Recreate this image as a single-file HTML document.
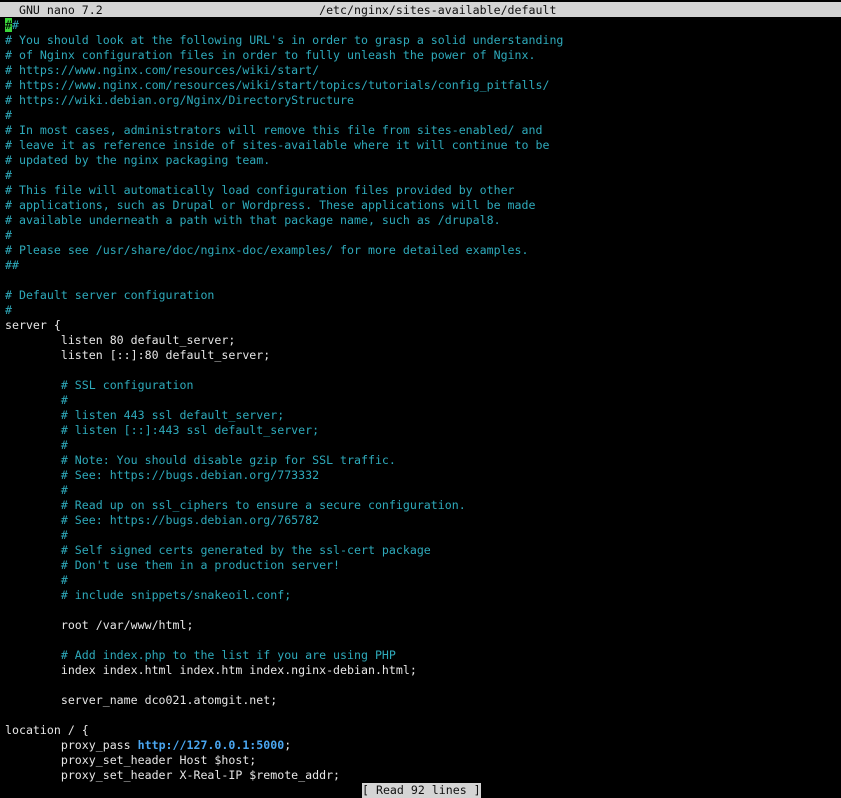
<!DOCTYPE html>
<html><head><meta charset="utf-8"><style>
html,body{margin:0;padding:0;background:#000;width:841px;height:789px;overflow:hidden}
.t{position:absolute;left:0;top:0;width:841px}
pre{margin:0;font-family:"DejaVu Sans Mono","Liberation Mono",monospace;font-size:11.6px;line-height:15px;color:#e6e6e6;padding-left:5px;white-space:pre}
.hd{position:absolute;left:0;top:2px;width:841px;height:15px;background:#d4d4d4}
.hd pre{color:#111}
.c{color:#2eaabb}
.u{color:#4aa6f0;font-weight:bold}
.cur{background:#3ad53a;color:#000}
.st{position:absolute;left:362px;top:783px;height:15px;background:#d4d4d4}
.st pre{color:#111;padding-left:0}
</style></head><body>
<div class="hd"><pre style="position:relative;top:1px">  GNU nano 7.2                               /etc/nginx/sites-available/default</pre></div>
<div class="t" style="top:18px"><pre><span class="c"><span class="cur">#</span>#
# You should look at the following URL's in order to grasp a solid understanding
# of Nginx configuration files in order to fully unleash the power of Nginx.
# https://www.nginx.com/resources/wiki/start/
# https://www.nginx.com/resources/wiki/start/topics/tutorials/config_pitfalls/
# https://wiki.debian.org/Nginx/DirectoryStructure
#
# In most cases, administrators will remove this file from sites-enabled/ and
# leave it as reference inside of sites-available where it will continue to be
# updated by the nginx packaging team.
#
# This file will automatically load configuration files provided by other
# applications, such as Drupal or Wordpress. These applications will be made
# available underneath a path with that package name, such as /drupal8.
#
# Please see /usr/share/doc/nginx-doc/examples/ for more detailed examples.
##</span>

<span class="c"># Default server configuration
#</span>
server {
        listen 80 default_server;
        listen [::]:80 default_server;

<span class="c">        # SSL configuration
        #
        # listen 443 ssl default_server;
        # listen [::]:443 ssl default_server;
        #
        # Note: You should disable gzip for SSL traffic.
        # See: https://bugs.debian.org/773332
        #
        # Read up on ssl_ciphers to ensure a secure configuration.
        # See: https://bugs.debian.org/765782
        #
        # Self signed certs generated by the ssl-cert package
        # Don't use them in a production server!
        #
        # include snippets/snakeoil.conf;</span>

        root /var/www/html;

<span class="c">        # Add index.php to the list if you are using PHP</span>
        index index.html index.htm index.nginx-debian.html;

        server_name dco021.atomgit.net;

location / {
        proxy_pass <span class="u">http://127.0.0.1:5000</span>;
        proxy_set_header Host $host;
        proxy_set_header X-Real-IP $remote_addr;</pre></div>
<div class="st"><pre>[ Read 92 lines ]</pre></div>
</body></html>
